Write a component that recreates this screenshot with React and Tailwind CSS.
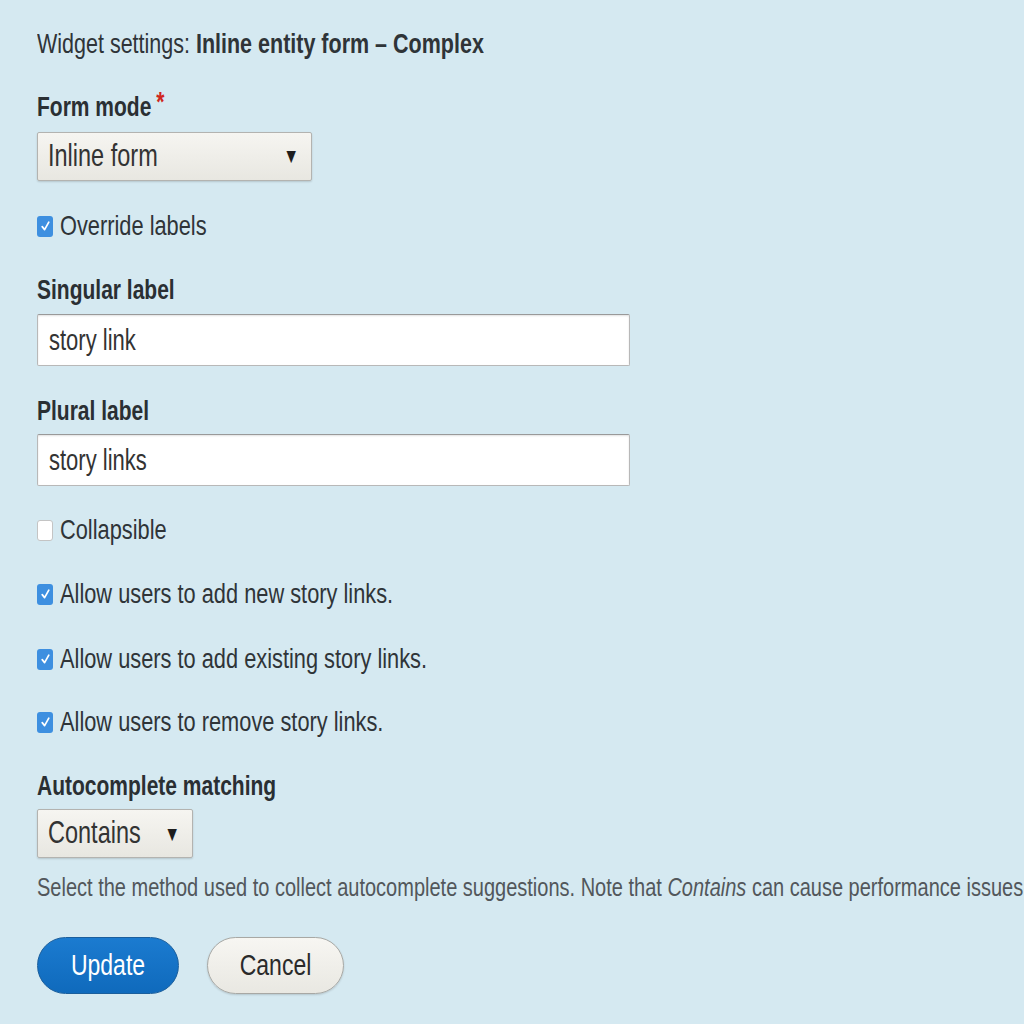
import React from 'react';

const font = { fontFamily: '"Liberation Sans", Arial, sans-serif' };

// the reference screenshot is stretched vertically, so text glyphs get a taller scale
const Txt = ({ children, className = '' }) => (
  <span className={`inline-block origin-center scale-y-[1.3] ${className}`}>{children}</span>
);

const Checkbox = ({ checked }) =>
  checked ? (
    <span className="inline-flex h-[21px] w-[16px] shrink-0 items-center justify-center rounded-[3px] bg-[#3d8fe0]">
      <svg width="11" height="14" viewBox="0 0 11 14">
        <path d="M2.2 7.6 L4.6 10.6 L8.8 3.2" fill="none" stroke="#fff" strokeWidth="1.7" strokeLinecap="round" strokeLinejoin="round" />
      </svg>
    </span>
  ) : (
    <span className="inline-block h-[21px] w-[16px] shrink-0 rounded-[3px] border border-[#c4c4c4] bg-white" />
  );

const CheckRow = ({ checked, label, className }) => (
  <div className={`flex h-[30px] items-center gap-[7px] whitespace-nowrap text-[21.8px] text-[#2f3438] ${className}`}>
    <Checkbox checked={checked} />
    <Txt>{label}</Txt>
  </div>
);

const Select = ({ value, width }) => (
  <div
    className={`flex h-[49px] ${width} items-center justify-between rounded-[2px] border border-[#b3b3b0] bg-gradient-to-b from-[#f6f5f1] to-[#e8e7e1] pl-[10px] pr-[12px] text-[23.5px] text-[#333] shadow-[0_1px_2px_rgba(0,0,0,0.15)]`}
  >
    <Txt>{value}</Txt>
    <Txt className="text-[16px] text-[#1e1e1e]">▼</Txt>
  </div>
);

const TextInput = ({ value, className }) => (
  <div
    className={`flex h-[52px] w-[593px] items-center rounded-[2px] border border-[#b8b8b8] border-t-[#999] bg-white pl-[11px] text-[22px] text-[#333] shadow-[inset_0_1px_2px_rgba(0,0,0,0.12)] ${className}`}
  >
    <Txt>{value}</Txt>
  </div>
);

const Label = ({ children, className }) => (
  <div className={`flex h-[30px] items-center text-[21px] font-bold text-[#2a2f33] ${className}`}>{children}</div>
);

export default function App() {
  return (
    <div style={font} className="h-[1024px] w-[1024px] overflow-hidden bg-[#d5e9f1] pl-[37px] pt-[29px]">
      <div className="flex h-[30px] items-center whitespace-nowrap text-[21.5px] text-[#2f3438]">
        <Txt>
          Widget settings: <span className="font-bold">Inline entity form – Complex</span>
        </Txt>
      </div>

      <Label className="mt-[33px]">
        <Txt>Form mode</Txt>
        <Txt className="ml-[5px] -mt-[10px] text-[#d0261c]">*</Txt>
      </Label>
      <div className="mt-[10px]">
        <Select value="Inline form" width="w-[275px]" />
      </div>

      <CheckRow checked label="Override labels" className="mt-[30px]" />

      <Label className="mt-[34px]">
        <Txt>Singular label</Txt>
      </Label>
      <TextInput value="story link" className="mt-[9px]" />

      <Label className="mt-[30px]">
        <Txt>Plural label</Txt>
      </Label>
      <TextInput value="story links" className="mt-[8px]" />

      <CheckRow checked={false} label="Collapsible" className="mt-[29px]" />
      <CheckRow checked label="Allow users to add new story links." className="mt-[34px]" />
      <CheckRow checked label="Allow users to add existing story links." className="mt-[35px]" />
      <CheckRow checked label="Allow users to remove story links." className="mt-[33px]" />

      <Label className="mt-[34px]">
        <Txt>Autocomplete matching</Txt>
      </Label>
      <div className="mt-[8px]">
        <Select value="Contains" width="w-[156px]" />
      </div>
      <div className="mt-[17px] flex h-[24px] items-center whitespace-nowrap text-[20px] text-[#52575b]">
        <Txt className="scale-y-[1.25]">
          Select the method used to collect autocomplete suggestions. Note that <em>Contains</em> can cause performance
          issues on sites with thousands of entities.
        </Txt>
      </div>

      <div className="mt-[38px] flex gap-[28px]">
        <button className="h-[57px] w-[142px] rounded-full border border-[#1a5e9c] bg-gradient-to-b from-[#1b7bd0] to-[#0f6abc] text-[23px] text-white">
          <Txt>Update</Txt>
        </button>
        <button className="h-[57px] w-[137px] rounded-full border border-[#a8a8a4] bg-gradient-to-b from-[#f7f6f2] to-[#e9e8e2] text-[23px] text-[#2a2a2a] shadow-[0_1px_2px_rgba(0,0,0,0.15)]">
          <Txt>Cancel</Txt>
        </button>
      </div>
    </div>
  );
}
